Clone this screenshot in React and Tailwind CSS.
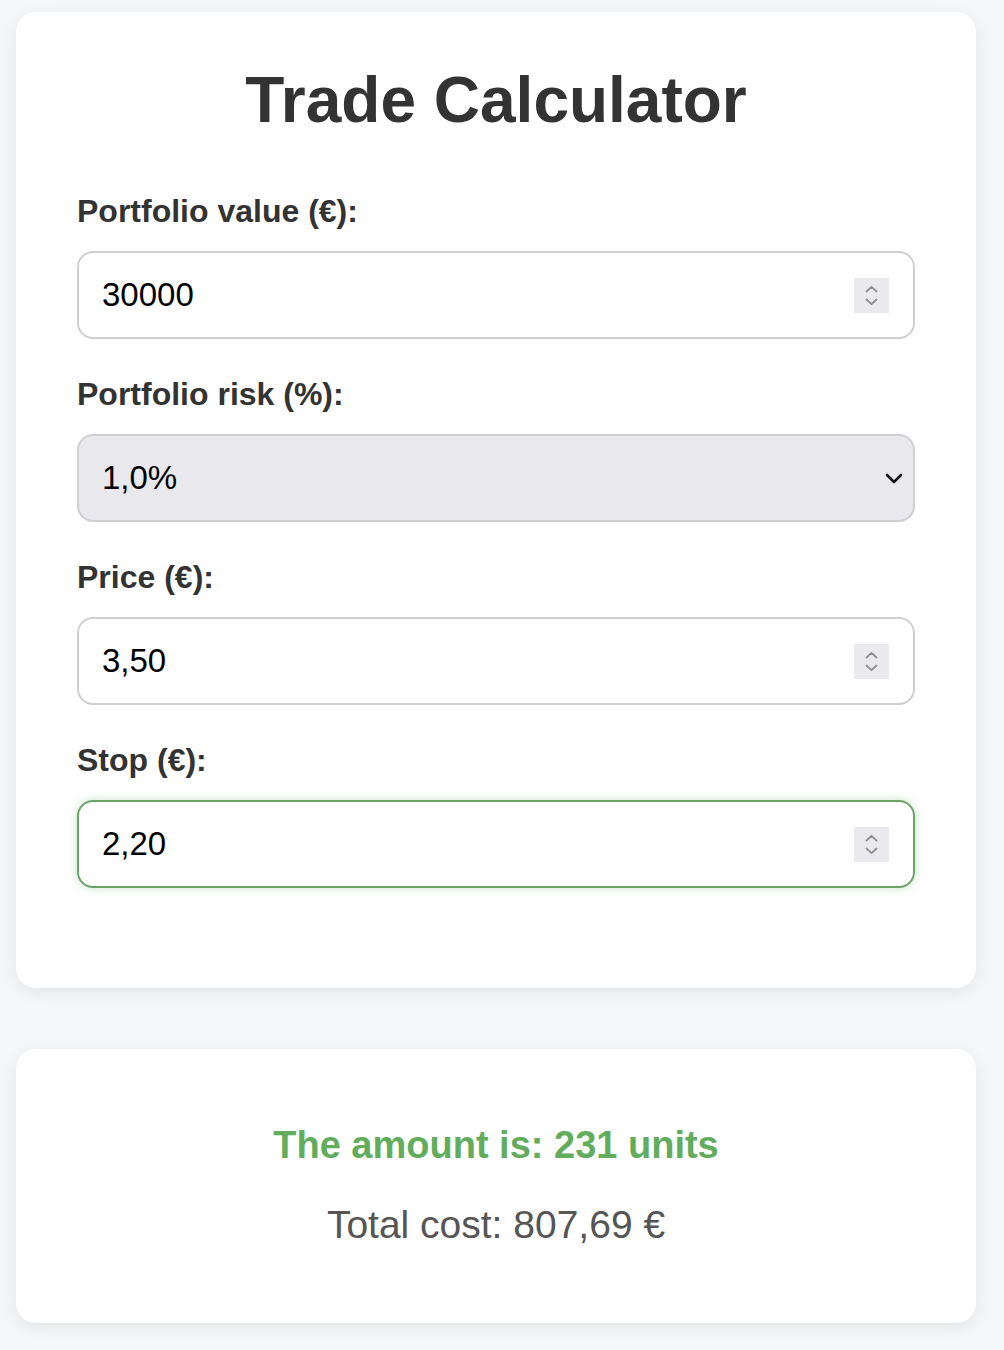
import React from 'react'

const font = { fontFamily: '"Liberation Sans", Arial, Helvetica, sans-serif' }

function Spinner() {
  return (
    <div className="flex h-[35px] w-[35px] flex-col items-center justify-center gap-[5px] bg-[#e9e9ee]">
      <svg width="13" height="8" viewBox="0 0 13 8" fill="none">
        <path d="M1.5 6.5L6.5 1.8l5 4.7" stroke="#8e8e93" strokeWidth="1.8" strokeLinecap="round" strokeLinejoin="round" />
      </svg>
      <svg width="13" height="8" viewBox="0 0 13 8" fill="none">
        <path d="M1.5 1.5l5 4.7 5-4.7" stroke="#8e8e93" strokeWidth="1.8" strokeLinecap="round" strokeLinejoin="round" />
      </svg>
    </div>
  )
}

function Field({ label, children }) {
  return (
    <div className="mb-[37px] last:mb-0">
      <label className="mb-[21px] block text-[32px] font-bold leading-[37px] text-[#333]">{label}</label>
      {children}
    </div>
  )
}

function NumberBox({ value, focused }) {
  return (
    <div
      className={`flex h-[88px] items-center justify-between rounded-[16px] border-2 bg-white pl-[23px] pr-[24px] text-[33px] text-black ${
        focused ? 'border-[#6aa567] shadow-[0_0_10px_rgba(98,173,92,0.35)]' : 'border-[#cfcfcf]'
      }`}
    >
      <span>{value}</span>
      <Spinner />
    </div>
  )
}

export default function App() {
  return (
    <div className="min-h-[1350px] bg-[#f5f6f8] pl-[16px] pr-[28px] pt-[12px] pb-[25px]" style={font}>
      {/* calculator form */}
      <div className="rounded-[20px] bg-white px-[61px] pt-[51px] pb-[100px] shadow-[0_4px_16px_rgba(0,0,0,0.07)]">
        <h1 className="mb-[56px] text-center text-[64px] font-bold leading-[74px] text-[#333]">Trade Calculator</h1>

        <Field label="Portfolio value (€):">
          <NumberBox value="30000" />
        </Field>

        <Field label="Portfolio risk (%):">
          <div className="flex h-[88px] items-center justify-between rounded-[16px] border-2 border-[#cfcfcf] bg-[#e9e9ed] pl-[23px] pr-[10px] text-[33px] text-black">
            <span>1,0%</span>
            <svg width="18" height="11" viewBox="0 0 18 11" fill="none">
              <path d="M2 2l7 7 7-7" stroke="#111" strokeWidth="2.6" strokeLinecap="round" strokeLinejoin="round" />
            </svg>
          </div>
        </Field>

        <Field label="Price (€):">
          <NumberBox value="3,50" />
        </Field>

        <Field label="Stop (€):">
          <NumberBox value="2,20" focused />
        </Field>
      </div>

      {/* result */}
      <div className="mt-[61px] rounded-[20px] bg-white pt-[74px] pb-[76px] text-center shadow-[0_4px_16px_rgba(0,0,0,0.07)]">
        <p className="text-[38px] font-bold leading-[44px] text-[#62ad5c]">The amount is: 231 units</p>
        <p className="mt-[36px] text-[39px] leading-[44px] text-[#555]">Total cost: 807,69 €</p>
      </div>
    </div>
  )
}
